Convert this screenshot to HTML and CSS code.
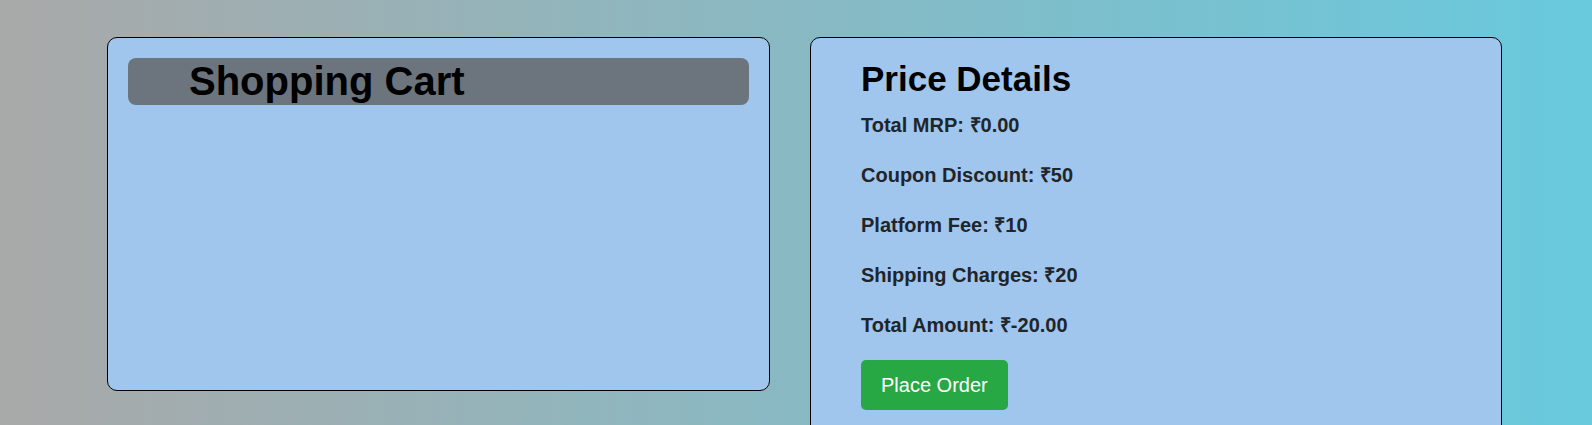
FILE: index.html
```html
<!DOCTYPE html>
<html lang="en">
<head>
<meta charset="utf-8">
<title>Shopping Cart</title>
<link rel="stylesheet" href="styles.css">
</head>
<body>
<main class="page">
  <section class="card cart">
    <h1 class="cart-title">Shopping Cart</h1>
  </section>
  <section class="card price">
    <h2 class="price-title">Price Details</h2>
    <p class="line">Total MRP: ₹0.00</p>
    <p class="line">Coupon Discount: ₹50</p>
    <p class="line">Platform Fee: ₹10</p>
    <p class="line">Shipping Charges: ₹20</p>
    <p class="line">Total Amount: ₹-20.00</p>
    <button class="btn-order">Place Order</button>
  </section>
</main>
</body>
</html>
```

FILE: styles.css
```css
html, body {
  margin: 0;
  height: 100%;
}
body {
  font-family: "Liberation Sans", Arial, sans-serif;
  background: linear-gradient(to right, #a9a9a9, #68c9dd);
  color: #212529;
  overflow: hidden;
}
.page {
  display: flex;
  align-items: flex-start;
  gap: 40px;
  padding: 37px 90px 0 107px;
}
.card {
  box-sizing: border-box;
  background: #a0c6ee;
  border: 1px solid #000;
  border-radius: 10px;
}
.cart {
  width: 663px;
  height: 354px;
  padding: 20px;
}
.cart-title {
  margin: 0;
  padding-left: 61px;
  background: #6c757d;
  border-radius: 8px;
  font-size: 40px;
  line-height: 47px;
  font-weight: bold;
  color: #000;
}
.price {
  flex: 1;
  padding: 21px 50px 50px;
}
.price-title {
  margin: 0 0 11px;
  font-size: 35px;
  line-height: 40px;
  font-weight: bold;
  color: #000;
}
.line {
  margin: 0 0 20px;
  font-size: 20px;
  line-height: 30px;
  font-weight: bold;
}
.btn-order {
  font-family: "Liberation Sans", Arial, sans-serif;
  font-size: 20px;
  line-height: 24px;
  padding: 13px 20px;
  background: #28a745;
  color: #fff;
  border: none;
  border-radius: 5px;
}
```
